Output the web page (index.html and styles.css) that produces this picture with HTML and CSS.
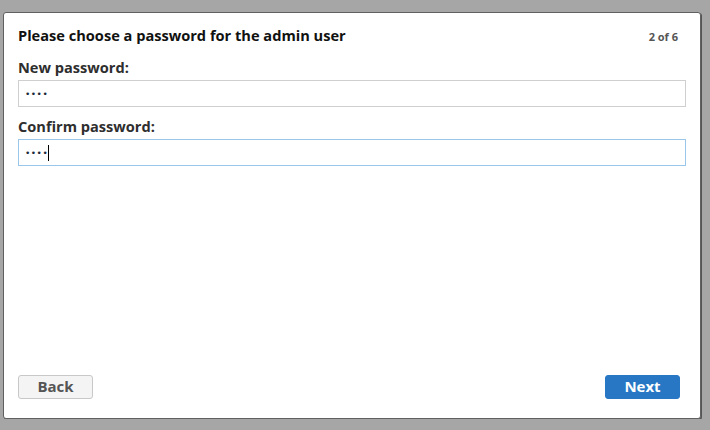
FILE: index.html
```html
<!DOCTYPE html>
<html>
<head>
<meta charset="utf-8">
<link rel="stylesheet" href="styles.css">
</head>
<body>
<div class="dialog">
  <div class="header">
    <div class="title">Please choose a password for the admin user</div>
    <div class="step">2 of 6</div>
  </div>
  <label class="label">New password:</label>
  <div class="input"><span class="dots">••••</span></div>
  <label class="label">Confirm password:</label>
  <div class="input focus"><span class="dots">••••</span><span class="caret"></span></div>
  <div class="footer">
    <button class="btn back">Back</button>
    <button class="btn next">Next</button>
  </div>
</div>
</body>
</html>
```
FILE: styles.css
```css
html, body {
  margin: 0;
  padding: 0;
  background: #a6a6a6;
  font-family: "Open Sans", "Liberation Sans", sans-serif;
}
.dialog {
  margin: 12px 0 0 3px;
  width: 698px;
  height: 407px;
  background: #fff;
  border: 1px solid #606060;
  border-radius: 3px;
  box-shadow: 1px 1px 0 #555;
  display: flex;
  flex-direction: column;
  padding: 0 14px;
  box-sizing: border-box;
}
.header {
  display: flex;
  justify-content: space-between;
  align-items: baseline;
  padding-top: 12px;
  margin-bottom: 3px;
}
.title {
  font-size: 14.6px;
  font-weight: 700;
  color: #111;
  line-height: 20px;
}
.step {
  font-size: 11px;
  font-weight: 700;
  color: #555;
  margin-right: 8px;
}
.label {
  display: block;
  font-size: 14.6px;
  font-weight: 700;
  color: #2e2e2e;
  line-height: 20px;
  margin-top: 9px;
  margin-bottom: 3px;
}
.input {
  height: 27px;
  border: 1px solid #cfcfcf;
  box-sizing: border-box;
  display: flex;
  align-items: center;
  padding-left: 6px;
}
.input.focus {
  border-color: #9ac6ea;
}
.dots {
  font-family: "DejaVu Sans", sans-serif;
  font-size: 9px;
  letter-spacing: 0.5px;
  color: #1a2a3a;
}
.caret {
  width: 1px;
  height: 16px;
  background: #000;
}
.footer {
  margin-top: auto;
  margin-bottom: 19px;
  display: flex;
  justify-content: space-between;
  padding-right: 6px;
}
.btn {
  width: 75px;
  height: 24px;
  border-radius: 3px;
  font-family: "Open Sans", "Liberation Sans", sans-serif;
  font-size: 15px;
  font-weight: 700;
  padding: 0 0 2px;
  line-height: 20px;
}
.back {
  background: #f4f4f4;
  border: 1px solid #c8c8c8;
  color: #555;
}
.next {
  background: #2777c4;
  border: 1px solid #2777c4;
  color: #fff;
}
```
